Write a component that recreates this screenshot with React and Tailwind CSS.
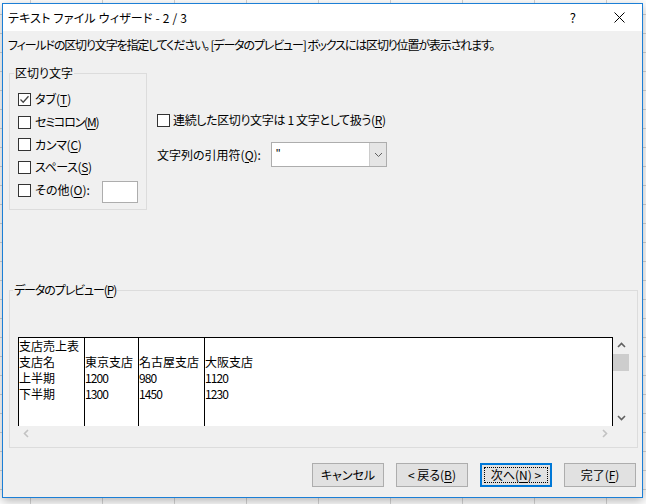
import React from "react";

function Box({ checked }) {
  return (
    <span className="w-[13px] h-[13px] border border-[#333333] bg-white flex items-center justify-center shrink-0">
      {checked && (
        <svg width="11" height="11" viewBox="0 0 11 11">
          <path d="M1.5 5.5 L4.2 8.2 L9.5 2.2" stroke="#444" fill="none" strokeWidth="1.3" />
        </svg>
      )}
    </span>
  );
}

function U({ children }) {
  return <span className="underline underline-offset-2">{children}</span>;
}

function Chev({ dir, color = "#606060" }) {
  const d = {
    up: "M1 6 L4.5 2.5 L8 6",
    down: "M1 3 L4.5 6.5 L8 3",
    left: "M6 1 L2.5 4.5 L6 8",
    right: "M3 1 L6.5 4.5 L3 8",
  }[dir];
  return (
    <svg width="9" height="9" viewBox="0 0 9 9">
      <path d={d} stroke={color} strokeWidth="1.6" fill="none" />
    </svg>
  );
}

function Btn({ children, def }) {
  return (
    <div
      className={
        "w-[72px] h-[24px] flex items-center justify-center bg-[#e1e1e1] " +
        (def ? "border-2 border-[#0078d7]" : "border border-[#adadad]")
      }
    >
      {def ? (
        <div className="w-[64px] h-[16px] border border-dotted border-black flex items-center justify-center">
          {children}
        </div>
      ) : (
        children
      )}
    </div>
  );
}

export default function App() {
  const rows = [
    ["支店売上表", "", "", ""],
    ["支店名", "東京支店", "名古屋支店", "大阪支店"],
    ["上半期", "1200", "980", "1120"],
    ["下半期", "1300", "1450", "1230"],
  ];
  const colW = ["w-[66px] border-r", "w-[54px] border-r", "w-[66px] border-r", "flex-1"];
  const opts = [
    [true, <>タブ(<U>T</U>)</>, ""],
    [false, <>セミコロン(<U>M</U>)</>, "tracking-[-1.2px]"],
    [false, <>カンマ(<U>C</U>)</>, "tracking-[-0.3px]"],
    [false, <>スペース(<U>S</U>)</>, "tracking-[-0.4px]"],
  ];
  return (
    <div className="relative w-[646px] h-[504px] overflow-hidden bg-white bg-[linear-gradient(to_right,#d4d4d4_1px,transparent_1px),linear-gradient(to_bottom,#d4d4d4_1px,transparent_1px)] bg-[size:72px_19px] bg-[position:30px_14px] font-['Noto_Sans_CJK_JP',sans-serif] text-[12px] text-black [font-feature-settings:'palt'] leading-[14px]">
      <div className="absolute left-[2px] top-[3px] w-[641px] h-[495px] border border-[#1c7fd6] bg-[#f0f0f0] shadow-[0_3px_10px_rgba(0,0,0,0.3)] flex flex-col">
        {/* title bar */}
        <div className="h-[27px] bg-white flex items-center pl-[5px] shrink-0">
          <span className="tracking-[0.2px]">テキスト ファイル ウィザード - 2 / 3</span>
          <span className="ml-auto mr-[38px] text-[13px]">?</span>
          <svg width="11" height="11" viewBox="0 0 11 11" className="mr-[17px]">
            <path d="M0.5 0.5 L10.5 10.5 M10.5 0.5 L0.5 10.5" stroke="#000" strokeWidth="1" />
          </svg>
        </div>
        {/* instruction */}
        <div className="mt-[7px] pl-[5px] h-[14px] whitespace-nowrap tracking-[-1.15px]">
          フィールドの区切り文字を指定してください。 [データのプレビュー] ボックスには区切り位置が表示されます。
        </div>
        {/* top row */}
        <div className="mt-[14px] flex">
          <fieldset className="ml-[6px] w-[138px] h-[144px] border border-[#dcdcdc] flex flex-col">
            <legend className="ml-[4px] px-[1px] h-[14px]">区切り文字</legend>
            <div className="mt-[8px] pl-[8px] flex flex-col">
              {opts.map(([c, l, t], i) => (
                <div key={i} className="h-[22.7px] flex items-center gap-[4px]">
                  <Box checked={c} />
                  <span className={t}>{l}</span>
                </div>
              ))}
              <div className="h-[22.7px] flex items-center gap-[4px]">
                <Box />
                <span>その他(<U>O</U>):</span>
                <div className="ml-auto mr-[8px] mt-[3px] w-[36px] h-[22px] bg-white border border-[#adadad]" />
              </div>
            </div>
          </fieldset>
          <div className="ml-[10px] flex flex-col">
            <div className="mt-[47px] h-[14px] flex items-center gap-[3px]">
              <Box />
              <span className="tracking-[-0.35px]">連続した区切り文字は 1 文字として扱う(<U>R</U>)</span>
            </div>
            <div className="mt-[15px] flex items-center">
              <span className="w-[114px]">文字列の引用符(<U>Q</U>):</span>
              <div className="w-[116px] h-[25px] bg-white border border-[#adadad] flex">
                <span className="pl-[4px] flex-1 leading-[22px] font-['Liberation_Sans',sans-serif] text-black">"</span>
                <div className="w-[17px] bg-[#e5e5e5] border-l border-[#cccccc] flex items-center justify-center">
                  <svg width="9" height="6" viewBox="0 0 9 6">
                    <path d="M1 1 L4.5 4.5 L8 1" stroke="#606060" strokeWidth="1" fill="none" />
                  </svg>
                </div>
              </div>
            </div>
          </div>
        </div>
        {/* preview */}
        <fieldset className="mt-[73px] ml-[6px] w-[629px] h-[165px] border border-[#dcdcdc] flex flex-col">
          <legend className="ml-[3px] px-[1px] h-[14px] tracking-[-1.1px]">
            データのプレビュー(<U>P</U>)
          </legend>
          <div className="mt-[40px] ml-[8px] w-[611px] h-[104px] flex flex-col">
            <div className="flex h-[89px]">
              <div className="w-[595px] h-[89px] bg-white border-t border-l border-r border-black flex text-[12px] leading-[16px] [font-feature-settings:normal] font-['Noto_Sans_CJK_JP',monospace]">
                {colW.map((w, ci) => (
                  <div key={ci} className={w + " border-black h-full"}>
                    {rows.map((r, ri) => (
                      <div
                        key={ri}
                        className={
                          "h-[16px] whitespace-nowrap " +
                          (/^\d+$/.test(r[ci]) ? "tracking-[-0.9px]" : "")
                        }
                      >
                        {r[ci]}
                      </div>
                    ))}
                  </div>
                ))}
              </div>
              <div className="w-[16px] h-[89px] flex flex-col items-center">
                <div className="h-[17px] flex items-center">
                  <Chev dir="up" />
                </div>
                <div className="w-[16px] h-[17px] bg-[#cdcdcd]" />
                <div className="mt-auto h-[17px] flex items-center">
                  <Chev dir="down" />
                </div>
              </div>
            </div>
            <div className="h-[15px] w-[595px] flex items-center justify-between px-[4px]">
              <Chev dir="left" color="#c2c2c2" />
              <Chev dir="right" color="#c2c2c2" />
            </div>
          </div>
        </fieldset>
        {/* buttons */}
        <div className="mt-[15px] flex justify-end gap-[12px] pr-[6px]">
          <Btn>キャンセル</Btn>
          <Btn>&lt; 戻る(<U>B</U>)</Btn>
          <Btn def>次へ(<U>N</U>) &gt;</Btn>
          <Btn>完了(<U>F</U>)</Btn>
        </div>
      </div>
    </div>
  );
}
